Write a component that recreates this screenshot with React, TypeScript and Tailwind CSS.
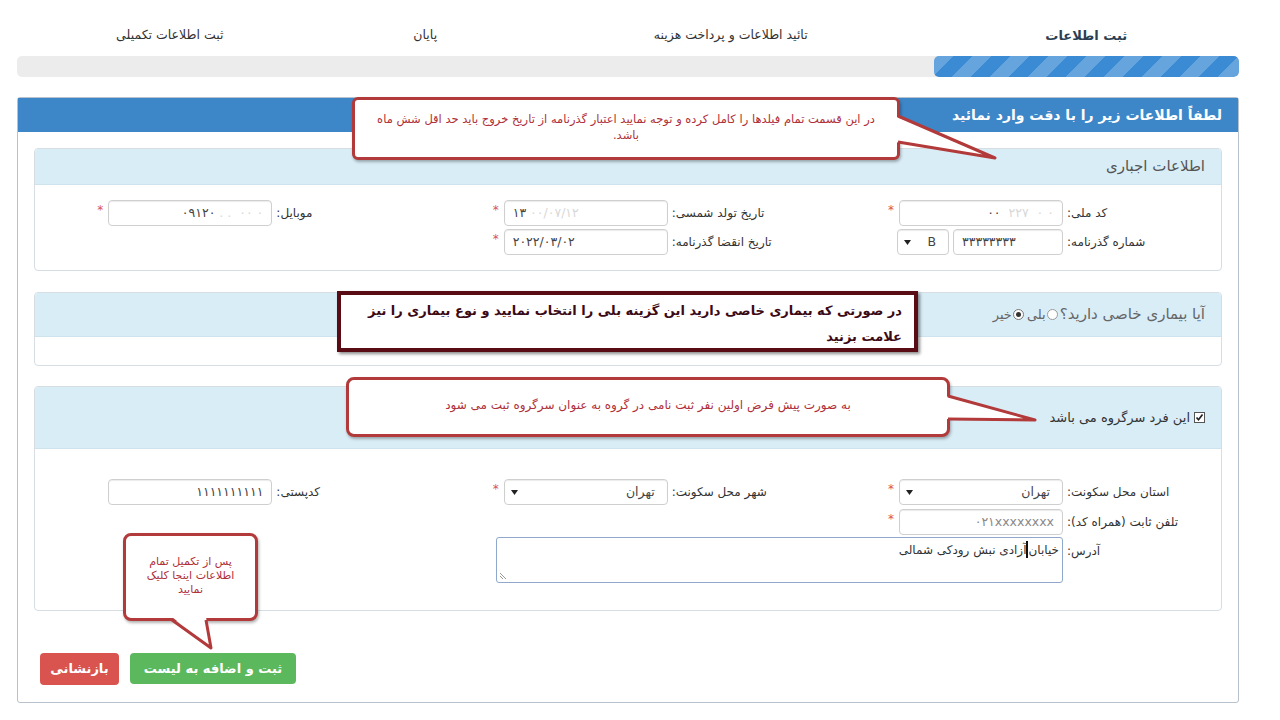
import React from "react";

const Star = () => (
  <span className="mr-[5px] -mt-[6px] text-[#d9534f] text-[12px] leading-none">*</span>
);

function Cell({ label, children, star }: { label?: string; children?: React.ReactNode; star?: boolean }) {
  return (
    <div className="flex items-center h-[26px]">
      <div className="w-[158px] shrink-0 text-left pl-[4px] text-[12px] text-[#333] whitespace-nowrap">{label}</div>
      {children}
      {star && <Star />}
    </div>
  );
}

function Box({ children, className = "", ltr = false }: { children?: React.ReactNode; className?: string; ltr?: boolean }) {
  return (
    <div
      dir={ltr ? "ltr" : undefined}
      className={`h-[26px] border border-[#cfcfcf] rounded-[4px] bg-white shadow-[inset_0_1px_1px_rgba(0,0,0,0.08)] flex items-center text-[12.5px] text-[#444] whitespace-nowrap overflow-hidden ${className}`}
    >
      {children}
    </div>
  );
}

const Arrow = () => (
  <svg width="7" height="5" viewBox="0 0 7 5">
    <path d="M0 0h7L3.5 5z" fill="#222" />
  </svg>
);

export default function App() {
  return (
    <div dir="rtl" className="relative w-[1280px] h-[720px] overflow-hidden bg-white text-[#333] font-['DejaVu_Sans',sans-serif]">
      <div className="pl-[17px] pr-[41px]">
        {/* steps */}
        <div className="grid grid-cols-4 mt-[26px] h-[18px] items-center text-[12.5px] text-[#333]">
          <div className="text-center font-bold text-[13px] text-[#2b3e52]">ثبت اطلاعات</div>
          <div className="text-center pr-[100px]">تائید اطلاعات و پرداخت هزینه</div>
          <div className="text-center pr-[100px]">پایان</div>
          <div className="text-center">ثبت اطلاعات تکمیلی</div>
        </div>
        <div className="mt-[12px] h-[21px] rounded-[5px] bg-[#ececec] overflow-hidden flex">
          <div className="w-1/4 h-full rounded-[5px] bg-[#3b8bd4] bg-[linear-gradient(135deg,rgba(255,255,255,0.22)_25%,transparent_25%,transparent_50%,rgba(255,255,255,0.22)_50%,rgba(255,255,255,0.22)_75%,transparent_75%,transparent)] bg-[length:38px_38px]" />
        </div>

        {/* main panel */}
        <div className="mt-[20px] h-[606px] border border-[#b8c2cc] rounded-[3px]">
          <div className="h-[34px] bg-[#3d86c7] flex items-center pr-[16px] text-white font-bold text-[14px]">
            لطفاً اطلاعات زیر را با دقت وارد نمائید
          </div>
          <div className="px-[16px] pt-[16px]">
            {/* panel 1 */}
            <div className="border border-[#d6dde3] rounded-[4px] overflow-hidden">
              <div className="h-[36px] bg-[#d9edf7] border-b border-[#cfe3ee] flex items-center pr-[16px] text-[15px] text-[#555]">
                اطلاعات اجباری
              </div>
              <div className="pt-[15px] pb-[15px] flex flex-col gap-[3px]">
                <div className="grid grid-cols-3">
                  <Cell label="کد ملی:" star>
                    <Box className="w-[164px] px-[8px] justify-end" ltr>
                      <span>۰۰</span>
                      <span className="text-[#d8d8d8]">&nbsp;&nbsp;۲۲۷&nbsp;&nbsp;۰&nbsp;۰</span>
                    </Box>
                  </Cell>
                  <Cell label="تاریخ تولد شمسی:" star>
                    <Box className="w-[164px] px-[8px]" ltr>
                      <span>۱۳</span>
                      <span className="text-[#d8d8d8]">&nbsp;۰۰/۰۷/۱۲</span>
                    </Box>
                  </Cell>
                  <Cell label="موبایل:" star>
                    <Box className="w-[164px] px-[8px] justify-end" ltr>
                      <span>۰۹۱۲۰</span>
                      <span className="text-[#d8d8d8]">&nbsp;. .&nbsp;&nbsp;۰۰ ۰</span>
                    </Box>
                  </Cell>
                </div>
                <div className="grid grid-cols-3">
                  <Cell label="شماره گذرنامه:">
                    <Box className="w-[110px] px-[8px]" ltr>
                      ۳۳۳۳۳۳۳۳
                    </Box>
                    <Box className="w-[52px] mr-[4px] pr-[12px] pl-[6px] justify-between">
                      <span>B</span>
                      <Arrow />
                    </Box>
                  </Cell>
                  <Cell label="تاریخ انقضا گذرنامه:" star>
                    <Box className="w-[164px] px-[8px]" ltr>
                      ۲۰۲۲/۰۳/۰۲
                    </Box>
                  </Cell>
                  <div />
                </div>
              </div>
            </div>

            {/* panel 2 */}
            <div className="mt-[21px] border border-[#d6dde3] rounded-[4px] overflow-hidden">
              <div className="h-[44px] bg-[#d9edf7] border-b border-[#cfe3ee] flex items-center pr-[16px] text-[#666]">
                <span className="text-[15px]">آیا بیماری خاصی دارید؟</span>
                <span className="w-[11px] h-[11px] rounded-full border border-[#9a9a9a] bg-white mr-[2px]" />
                <span className="text-[13px] mr-[1px]">بلی</span>
                <span className="w-[11px] h-[11px] rounded-full border border-[#777] bg-white mr-[3px] flex items-center justify-center">
                  <span className="w-[5px] h-[5px] rounded-full bg-[#333]" />
                </span>
                <span className="text-[13px] mr-[1px]">خیر</span>
              </div>
              <div className="h-[28px]" />
            </div>

            {/* panel 3 */}
            <div className="mt-[20px] border border-[#d6dde3] rounded-[4px] overflow-hidden">
              <div className="h-[62px] bg-[#d9edf7] border-b border-[#cfe3ee] flex items-center pr-[16px]">
                <span className="w-[11px] h-[11px] border border-[#555] bg-white flex items-center justify-center">
                  <svg width="9" height="9" viewBox="0 0 9 9">
                    <path d="M1.5 4.5l2 2.2 4-5.2" stroke="#222" strokeWidth="1.7" fill="none" />
                  </svg>
                </span>
                <span className="mr-[4px] text-[13px] text-[#333]">این فرد سرگروه می باشد</span>
              </div>
              <div className="pt-[30px] pb-[27px]">
                <div className="grid grid-cols-3">
                  <Cell label="استان محل سکونت:" star>
                    <Box className="w-[164px] pr-[12px] pl-[6px] justify-between">
                      <span>تهران</span>
                      <Arrow />
                    </Box>
                  </Cell>
                  <Cell label="شهر محل سکونت:" star>
                    <Box className="w-[164px] pr-[12px] pl-[6px] justify-between">
                      <span>تهران</span>
                      <Arrow />
                    </Box>
                  </Cell>
                  <Cell label="کدپستی:">
                    <Box className="w-[164px] px-[8px]">
                      ۱۱۱۱۱۱۱۱۱۱
                    </Box>
                  </Cell>
                </div>
                <div className="grid grid-cols-3 mt-[4px]">
                  <Cell label="تلفن ثابت (همراه کد):" star>
                    <Box className="w-[164px] px-[8px] text-[#888]">
                      ۰۲۱xxxxxxxx
                    </Box>
                  </Cell>
                </div>
                <div className="flex items-start mt-[2px]">
                  <div className="w-[158px] shrink-0 text-left pl-[4px] pt-[5px] text-[12px]">آدرس:</div>
                  <div className="relative w-[567px] h-[46px] border border-[#8fa8cc] rounded-[3px] bg-white pr-[3px] pt-[3px] text-[12px] text-[#333] flex items-start">
                    <span>خیابان</span>
                    <span className="w-[2px] h-[17px] bg-[#111]" />
                    <span>آزادی نبش رودکی شمالی</span>
                    <svg className="absolute left-[2px] bottom-[2px]" width="8" height="8" viewBox="0 0 8 8">
                      <path d="M1 1l6 6M1 4l3 3" stroke="#999" strokeWidth="1" />
                    </svg>
                  </div>
                </div>
              </div>
            </div>

            {/* buttons */}
            <div className="mt-[42px] flex justify-end gap-[11px] pl-[6px]">
              <div className="w-[166px] h-[31px] rounded-[4px] bg-[#5cb85c] text-white text-[13px] font-bold flex items-center justify-center">
                ثبت و اضافه به لیست
              </div>
              <div className="w-[79px] h-[32px] rounded-[4px] bg-[#d9534f] text-white text-[13px] font-bold flex items-center justify-center">
                بازنشانی
              </div>
            </div>
          </div>
        </div>
      </div>

      {/* callout 1 */}
      <div className="absolute left-[352px] top-[97px] w-[548px] h-[63px] border-[3px] border-[#b23a3a] rounded-[6px] bg-white shadow-[1px_2px_3px_rgba(0,0,0,0.3)] pt-[11px] px-[8px] text-center text-[11.5px] leading-[16px] text-[#b0303a] whitespace-nowrap">
        در این قسمت تمام فیلدها را کامل کرده و توجه نمایید اعتبار گذرنامه از تاریخ خروج باید حد اقل شش ماه
        <br />
        باشد.
      </div>

      {/* callout 2 */}
      <div className="absolute left-[337px] top-[291px] w-[581px] h-[61px] border-[4px] border-[#5a0c14] bg-white shadow-[2px_2px_3px_rgba(0,0,0,0.45)] pr-[12px] pt-[3px] text-right text-[13px] leading-[26px] font-bold text-[#3c0a14] whitespace-nowrap">
        در صورتی که بیماری خاصی دارید این گزینه بلی را انتخاب نمایید و نوع بیماری را نیز
        <br />
        علامت بزنید
      </div>

      {/* callout 3 */}
      <div className="absolute left-[346px] top-[377px] w-[604px] h-[60px] border-[3px] border-[#b23a3a] rounded-[8px] bg-white shadow-[1px_2px_3px_rgba(0,0,0,0.3)] flex items-center justify-center pb-[4px] text-[12px] text-[#b0303a]">
        به صورت پیش فرض اولین نفر ثبت نامی در گروه به عنوان سرگروه ثبت می شود
      </div>

      {/* callout 4 */}
      <div className="absolute left-[123px] top-[533px] w-[135px] h-[88px] border-[3px] border-[#b23a3a] rounded-[8px] bg-white shadow-[1px_2px_3px_rgba(0,0,0,0.3)] flex flex-col items-center pt-[19px] text-[11px] leading-[14px] text-[#b0303a]">
        <span>پس از تکمیل تمام</span>
        <span>اطلاعات اینجا کلیک</span>
        <span>نمایید</span>
      </div>

      {/* callout tails */}
      <svg className="absolute left-0 top-0 pointer-events-none" width="1280" height="720" viewBox="0 0 1280 720">
        <polygon points="895,116 895,142 995,158" fill="#fff" />
        <polyline points="898,116 995,158 898,142" fill="none" stroke="#b23a3a" strokeWidth="3" strokeLinejoin="round" />
        <polygon points="945,396 945,419 1035,420" fill="#fff" />
        <polyline points="948,396 1035,420 948,419" fill="none" stroke="#b23a3a" strokeWidth="3" strokeLinejoin="round" />
        <polygon points="172,617 206,617 211,648" fill="#fff" />
        <polyline points="172,620 211,648 206,620" fill="none" stroke="#b23a3a" strokeWidth="3" strokeLinejoin="round" />
      </svg>
    </div>
  );
}
